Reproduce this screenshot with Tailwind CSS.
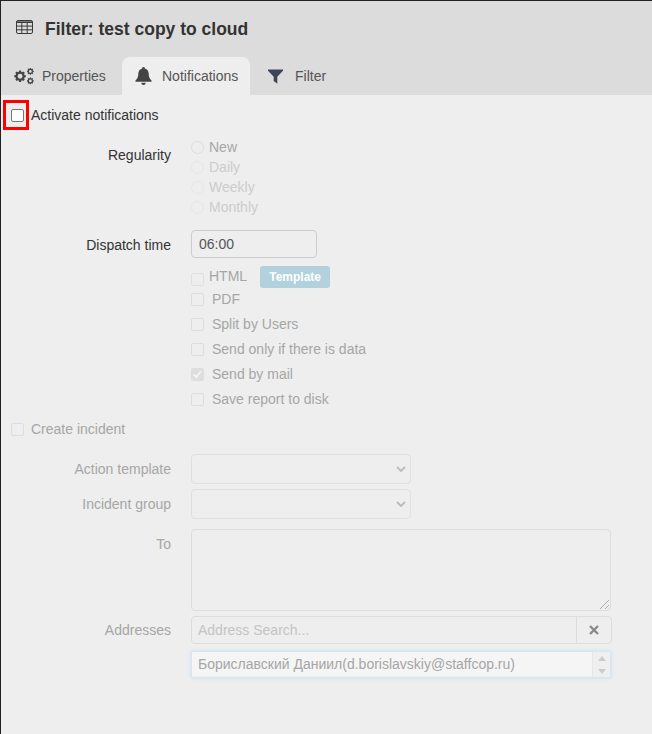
<!DOCTYPE html>
<html lang="en">
<head>
  <meta charset="UTF-8">
  <title>Filter: test copy to cloud</title>
  <script src="https://cdn.jsdelivr.net/npm/@tailwindcss/browser@4"></script>
</head>
<body class="bg-[#eeeeee]">
  <div class="relative w-[652px] h-[734px] overflow-hidden bg-[#eeeeee] border-l border-t border-[#222222] font-['Liberation_Sans',Arial,sans-serif] text-[14px] text-[#333333]">

    <!-- Header -->
    <div class="bg-[#dcdcdc] h-[94px]">
      <div class="flex items-center h-[56px] pl-[15px]">
        <svg class="w-[17px] h-[15px] text-[#3a3a3a] -mt-[3px]" viewBox="0 0 17 15" fill="none" stroke="currentColor" stroke-width="1">
          <rect x="0.5" y="0.5" width="16" height="13" rx="1.5"/>
          <path d="M0.500 2.200h16" stroke-width="1.600"/>
          <path d="M0.500 6.100h16M0.500 9.800h16M5.800 2v11.500M11.200 2v11.500"/>
        </svg>
        <h1 class="ml-[12px] mt-[2px] text-[17.5px] font-bold text-[#333333] leading-none">Filter: test copy to cloud</h1>
      </div>
      <div class="flex h-[38px] text-[#555555]">
        <div class="flex items-center w-[121px] pl-[13px]">
          <svg class="w-[20px] h-[17px]" viewBox="0 0 20 17" fill="#444444">
            <path fill-rule="evenodd" d="M6.200 3.400h2.400l.4 1.700 1 .4 1.500-.9 1.700 1.700-.9 1.500.4 1 1.700.4v2.400l-1.700.4-.4 1 .9 1.500-1.700 1.700-1.500-.9-1 .4-.4 1.700H6.200l-.4-1.700-1-.4-1.500.9-1.700-1.700.9-1.500-.4-1-1.700-.4V9.200l1.700-.4.4-1-.9-1.500 1.700-1.700 1.500.9 1-.4zM7.400 7.400a3 3 0 1 0 0 6 3 3 0 0 0 0-6z" transform="translate(0 -.3) scale(.82)"/>
            <path fill-rule="evenodd" d="M15.100 0h1.400l.3 1.100.7.300 1-.6 1 1-.6 1 .3.700 1.100.3v1.400l-1.100.3-.3.700.6 1-1 1-1-.6-.7.3-.3 1.100h-1.400l-.3-1.100-.7-.3-1 .6-1-1 .6-1-.3-.7-1.100-.3V3.800l1.100-.3.3-.7-.6-1 1-1 1 .6.7-.3zM15.800 2.600a1.900 1.900 0 1 0 0 3.800 1.900 1.900 0 0 0 0-3.800z" transform="translate(4.500 0) scale(.75)"/>
            <path fill-rule="evenodd" d="M15.100 0h1.400l.3 1.100.7.300 1-.6 1 1-.6 1 .3.700 1.100.3v1.400l-1.100.3-.3.700.6 1-1 1-1-.6-.7.3-.3 1.100h-1.400l-.3-1.100-.7-.3-1 .6-1-1 .6-1-.3-.7-1.100-.3V3.800l1.100-.3.3-.7-.6-1 1-1 1 .6.7-.3zM15.800 2.600a1.900 1.900 0 1 0 0 3.800 1.900 1.900 0 0 0 0-3.800z" transform="translate(4.500 9.500) scale(.75)"/>
          </svg>
          <span class="ml-[8px]">Properties</span>
        </div>
        <div class="flex items-center w-[128px] bg-[#eeeeee] rounded-t-[8px] pl-[13px]">
          <svg class="w-[17px] h-[18px]" viewBox="0 0 17 18" fill="#444444">
            <path d="M8.500 0a1.300 1.300 0 0 1 1.300 1.400C12.300 2 13.600 4 13.700 6.600c.1 3.200.7 5 2.800 7v1.200H.5v-1.200c2.100-2 2.700-3.800 2.800-7C3.400 4 4.700 2 7.200 1.400A1.300 1.300 0 0 1 8.500 0zM6.300 15.800h4.400a2.200 2.200 0 0 1-4.400 0z"/>
          </svg>
          <span class="ml-[10px]">Notifications</span>
        </div>
        <div class="flex items-center pl-[18px]">
          <svg class="w-[15px] h-[15px]" viewBox="0 0 15 15" fill="#3c4656">
            <path d="M0 .5h15v1.300L9.300 7.800v7L5.700 12V7.800L0 1.800z"/>
          </svg>
          <span class="ml-[12px]">Filter</span>
        </div>
      </div>
    </div>

    <!-- Activate notifications -->
    <div class="absolute left-[2px] top-[99px] w-[26px] h-[30px] border-[3px] border-[#ff0000]"></div>
    <div class="flex items-center h-[40px] pl-[10px]">
      <span class="w-[13px] h-[13px] border border-[#767676] rounded-[2px] bg-white"></span>
      <span class="ml-[7px]">Activate notifications</span>
    </div>

    <!-- Regularity -->
    <div class="flex pt-[2px]">
      <div class="w-[170px] text-right pt-[8px] leading-[20px]">Regularity</div>
      <div class="ml-[20px] flex flex-col text-[#cccccc]">
        <div class="flex items-center h-[20px] text-[#a6a6a6]"><span class="w-[13px] h-[13px] rounded-full border border-[#dddddd]"></span><span class="ml-[5px]">New</span></div>
        <div class="flex items-center h-[20px]"><span class="w-[13px] h-[13px] rounded-full border border-[#e6e6e6]"></span><span class="ml-[5px]">Daily</span></div>
        <div class="flex items-center h-[20px]"><span class="w-[13px] h-[13px] rounded-full border border-[#e6e6e6]"></span><span class="ml-[5px]">Weekly</span></div>
        <div class="flex items-center h-[20px]"><span class="w-[13px] h-[13px] rounded-full border border-[#e6e6e6]"></span><span class="ml-[5px]">Monthly</span></div>
      </div>
    </div>

    <!-- Dispatch time -->
    <div class="flex items-center mt-[13px]">
      <div class="w-[170px] text-right pt-[2px]">Dispatch time</div>
      <div class="ml-[20px] flex items-center w-[126px] h-[28px] pl-[7px] border border-[#cccccc] rounded-[4px] text-[#555555]">06:00</div>
    </div>

    <!-- Report options -->
    <div class="ml-[190px] mt-[8px] text-[#a6a6a6]">
      <div class="flex items-center h-[22px]">
        <span class="w-[13px] h-[13px] mt-[4px] border border-[#e0e0e0] rounded-[2px]"></span>
        <span class="ml-[5px] -mt-[1px]">HTML</span>
        <span class="ml-[13px] flex items-center justify-center w-[70px] h-[22px] rounded-[3px] bg-[#b2d1dc] text-white text-[12px] font-bold">Template</span>
      </div>
      <div class="flex items-center h-[25px] mt-[-1px]">
        <span class="w-[13px] h-[13px] border border-[#dddddd] rounded-[2px]"></span>
        <span class="ml-[8px]">PDF</span>
      </div>
      <div class="flex items-center h-[25px]">
        <span class="w-[13px] h-[13px] border border-[#dddddd] rounded-[2px]"></span>
        <span class="ml-[8px]">Split by Users</span>
      </div>
      <div class="flex items-center h-[25px]">
        <span class="w-[13px] h-[13px] border border-[#dddddd] rounded-[2px]"></span>
        <span class="ml-[8px]">Send only if there is data</span>
      </div>
      <div class="flex items-center h-[25px]">
        <span class="flex items-center justify-center w-[13px] h-[13px] rounded-[2px] bg-[#dedede]">
          <svg class="w-[9px] h-[9px]" viewBox="0 0 9 9" fill="none" stroke="#f5f5f5" stroke-width="1.800"><path d="M1 4.500l2.300 2.700L8 1.200"/></svg>
        </span>
        <span class="ml-[8px]">Send by mail</span>
      </div>
      <div class="flex items-center h-[25px]">
        <span class="w-[13px] h-[13px] border border-[#dddddd] rounded-[2px]"></span>
        <span class="ml-[8px]">Save report to disk</span>
      </div>
    </div>

    <!-- Create incident -->
    <div class="flex items-center h-[25px] mt-[5px] pl-[10px] text-[#a6a6a6]">
      <span class="w-[13px] h-[13px] border border-[#dddddd] rounded-[2px]"></span>
      <span class="ml-[7px]">Create incident</span>
    </div>

    <!-- Incident fields -->
    <div class="flex flex-col text-[#a6a6a6] mt-[12px]">
      <div class="flex items-center">
        <div class="w-[170px] text-right">Action template</div>
        <div class="ml-[20px] flex items-center justify-end w-[220px] h-[30px] pr-[4px] border border-[#e0e0e0] rounded-[4px]">
          <svg class="w-[10px] h-[7px]" viewBox="0 0 10 7" fill="none" stroke="#bbbbbb" stroke-width="1.800"><path d="M1 1l4 4 4-4"/></svg>
        </div>
      </div>
      <div class="flex items-center mt-[5px]">
        <div class="w-[170px] text-right">Incident group</div>
        <div class="ml-[20px] flex items-center justify-end w-[220px] h-[30px] pr-[4px] border border-[#e0e0e0] rounded-[4px]">
          <svg class="w-[10px] h-[7px]" viewBox="0 0 10 7" fill="none" stroke="#bbbbbb" stroke-width="1.800"><path d="M1 1l4 4 4-4"/></svg>
        </div>
      </div>
      <div class="flex mt-[10px]">
        <div class="w-[170px] text-right pt-[5px]">To</div>
        <div class="relative ml-[20px] w-[420px] h-[82px] border border-[#dddddd] rounded-[4px]">
          <svg class="absolute right-[1px] bottom-[1px] w-[9px] h-[9px]" viewBox="0 0 9 9" fill="none" stroke="#999999" stroke-width="0.800"><path d="M0 9l9-9M5 9l4-4"/></svg>
        </div>
      </div>
      <div class="flex items-center mt-[5px]">
        <div class="w-[170px] text-right">Addresses</div>
        <div class="ml-[20px] flex w-[421px] h-[28px] border border-[#dddddd] rounded-[4px]">
          <div class="flex items-center flex-1 pl-[6px] text-[#c4c4c4]">Address Search...</div>
          <div class="flex items-center justify-center w-[35px] border-l border-[#dddddd]">
            <svg class="w-[10px] h-[10px]" viewBox="0 0 10 10" fill="none" stroke="#8a8a8a" stroke-width="2.400"><path d="M1 1l8 8M9 1l-8 8"/></svg>
          </div>
        </div>
      </div>
      <div class="flex mt-[7px]">
        <div class="ml-[190px] flex w-[420px] h-[27px] border border-[#d5e5f1] shadow-[0_0_4px_rgba(102,175,233,0.25)] bg-[#f5f5f5] rounded-[2px] text-[14px]">
          <div class="flex items-center flex-1 pl-[6px] text-[#a6a6a6] border-b border-[#eeeeee]">Бориславский Даниил(d.borislavskiy@staffcop.ru)</div>
          <div class="flex flex-col items-center justify-center gap-[8px] w-[18px] bg-[#efefef] border-l border-[#e6e6e6]">
            <svg class="w-[8px] h-[5px]" viewBox="0 0 8 5" fill="#cccccc"><path d="M4 0l4 5H0z"/></svg>
            <svg class="w-[8px] h-[5px]" viewBox="0 0 8 5" fill="#cccccc"><path d="M0 0h8L4 5z"/></svg>
          </div>
        </div>
      </div>
    </div>
  </div>
</body>
</html>
